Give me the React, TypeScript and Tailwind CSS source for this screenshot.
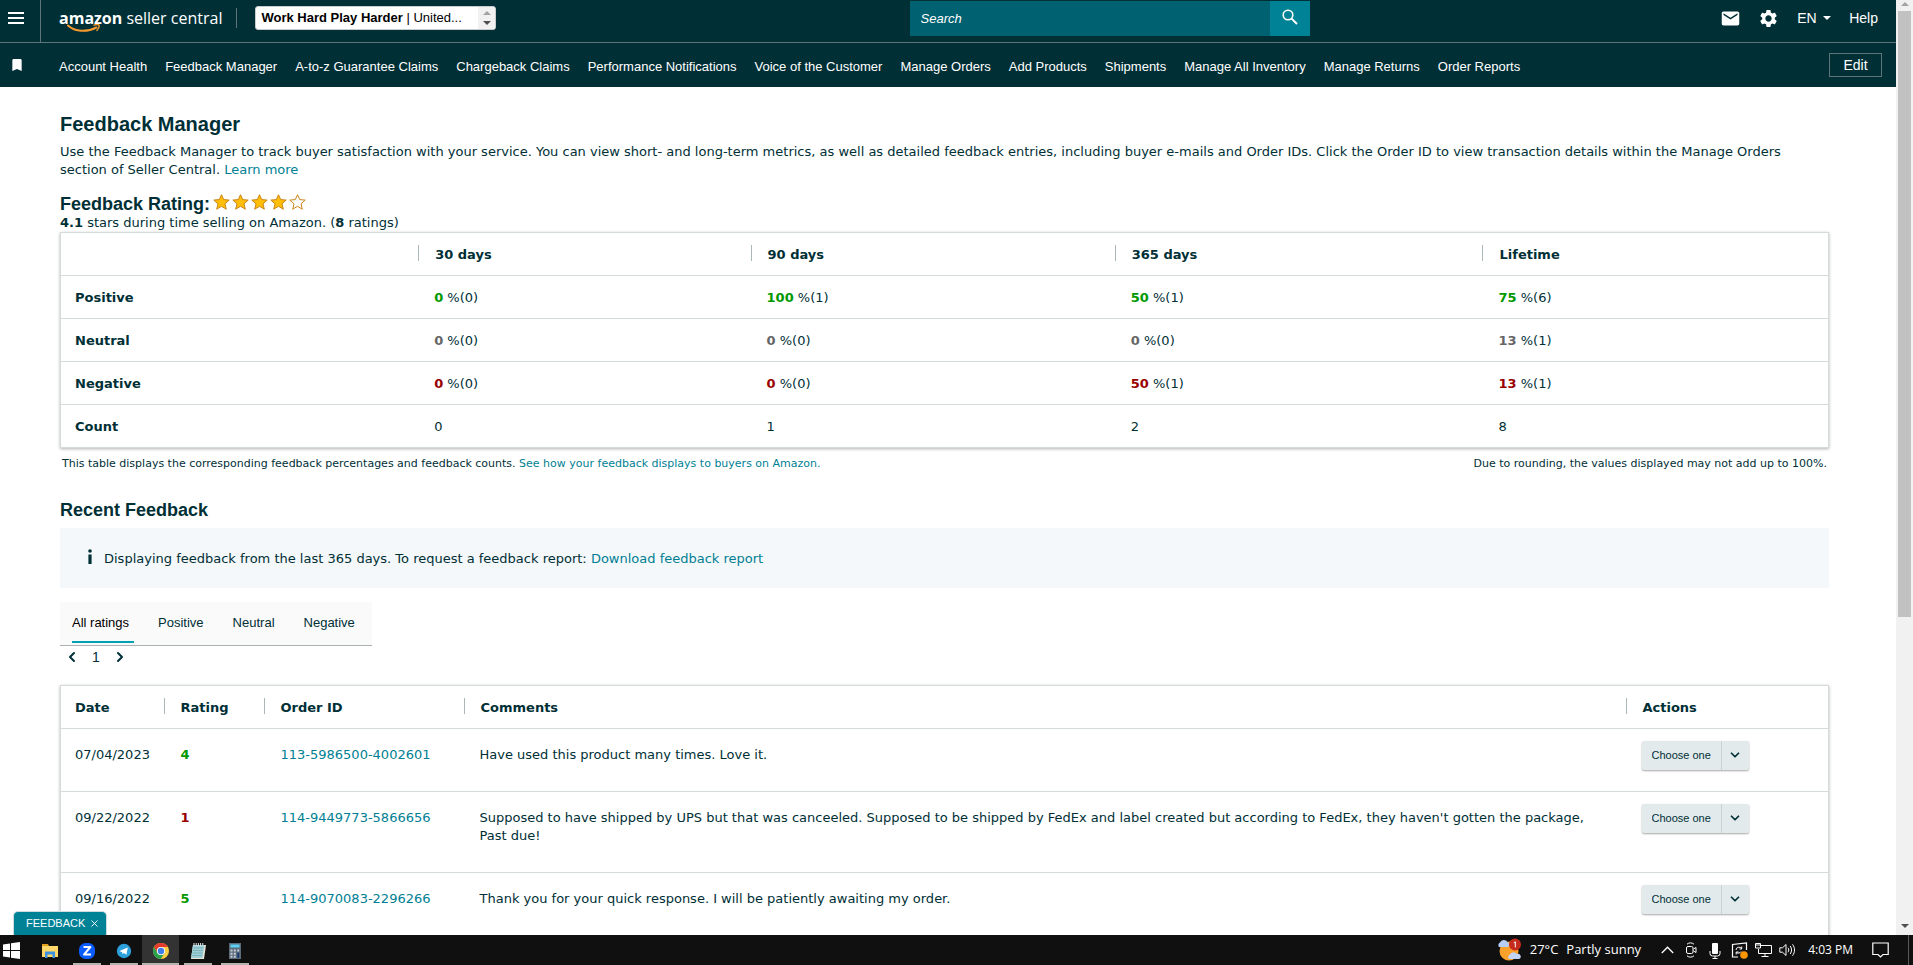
import React, { useState } from "react";
import { ChevronLeft, ChevronRight, ChevronDown, X } from "lucide-react";
import { MdSettings, MdEmail, MdBookmark } from "react-icons/md";

const navLinks = [
  "Account Health",
  "Feedback Manager",
  "A-to-z Guarantee Claims",
  "Chargeback Claims",
  "Performance Notifications",
  "Voice of the Customer",
  "Manage Orders",
  "Add Products",
  "Shipments",
  "Manage All Inventory",
  "Manage Returns",
  "Order Reports",
];

const periods = ["30 days", "90 days", "365 days", "Lifetime"];

const ratingRows = [
  { label: "Positive", color: "text-[#009900]", cells: [["0", "0"], ["100", "1"], ["50", "1"], ["75", "6"]] },
  { label: "Neutral", color: "text-[#666666]", cells: [["0", "0"], ["0", "0"], ["0", "0"], ["13", "1"]] },
  { label: "Negative", color: "text-[#990000]", cells: [["0", "0"], ["0", "0"], ["50", "1"], ["13", "1"]] },
];

const counts = ["0", "1", "2", "8"];

const feedback = [
  { date: "07/04/2023", rating: 4, order: "113-5986500-4002601", comment: "Have used this product many times. Love it." },
  {
    date: "09/22/2022",
    rating: 1,
    order: "114-9449773-5866656",
    comment:
      "Supposed to have shipped by UPS but that was canceeled. Supposed to be shipped by FedEx and label created but according to FedEx, they haven't gotten the package, Past due!",
  },
  { date: "09/16/2022", rating: 5, order: "114-9070083-2296266", comment: "Thank you for your quick response. I will be patiently awaiting my order." },
];

const tabs = ["All ratings", "Positive", "Neutral", "Negative"];

const linkClass = "text-[#007f94] hover:underline";

function Logo() {
  return (
    <a href="#" className="relative block whitespace-nowrap text-[16px] leading-[22px] text-white font-['Open_Sans','Noto_Sans',sans-serif]">
      <span className="font-bold">amazon</span> <span>seller central</span>
      <svg className="absolute left-2 top-[17px]" width="34" height="9" viewBox="0 0 34 9" fill="none" stroke="#f79a2d">
        <path d="M1 1.5 C8 8 20 8.5 29.5 3.5" strokeWidth="2" strokeLinecap="round" />
        <path d="M27 1.2 C29 .4 31.5 .6 32 1.2 C32.4 2.2 31.6 4.6 30 6.4" strokeWidth="1.4" strokeLinecap="round" />
      </svg>
    </a>
  );
}

function Header() {
  return (
    <header className="bg-[#002f36] text-white">
      <div className="flex h-[43px] items-start justify-between border-b border-[#5f7678]">
        <div className="flex flex-[8] items-start">
          <button aria-label="Menu" className="flex h-[42px] w-[41px] flex-col justify-start gap-[3px] border-r border-[#5f7678] px-2 pt-3">
            <span className="h-0.5 w-4 bg-white" />
            <span className="h-0.5 w-4 bg-white" />
            <span className="h-0.5 w-4 bg-white" />
          </button>
          <div className="flex items-center pl-[18px] pt-[6px]">
            <Logo />
            <span className="ml-[14px] h-5 w-px bg-[#5f7678]" />
            <button
              aria-haspopup="listbox"
              className="ml-[18px] flex h-6 w-[241px] items-center justify-between overflow-hidden rounded-[3px] border border-[#c9cccc] bg-white text-left text-[13px] text-black"
            >
              <span className="truncate pl-[5px]">
                <b>Work Hard Play Harder</b> | United...
              </span>
              <span className="flex h-full w-[17px] flex-col items-center justify-center gap-[6px] bg-[#f1f1f1]">
                <svg width="8" height="4" viewBox="0 0 8 4"><path d="M0 4 4 0 8 4Z" fill="#a3a3a3" /></svg>
                <svg width="8" height="4" viewBox="0 0 8 4"><path d="M0 0 4 4 8 0Z" fill="#505050" /></svg>
              </span>
            </button>
          </div>
        </div>
        <form role="search" className="mt-px flex h-[35px] w-[400px]" onSubmit={(e) => e.preventDefault()}>
          <input
            aria-label="Search"
            placeholder="Search"
            className="min-w-0 flex-1 bg-[#006170] px-[11px] text-[13px] italic text-white outline-none placeholder:text-white"
          />
          <button aria-label="Go" className="flex w-10 items-center justify-center bg-[#008296] pb-1">
            <svg width="16" height="16" viewBox="0 0 16 16" fill="none" stroke="#fff">
              <circle cx="6" cy="6" r="4.8" strokeWidth="1.6" />
              <path d="M9.6 9.6 15 15" strokeWidth="2" />
            </svg>
          </button>
        </form>
        <div className="flex h-9 flex-[5] items-center justify-end pr-[18px] text-[14px]">
          <button aria-label="Messages"><MdEmail size={21} /></button>
          <button aria-label="Settings" className="ml-[17px]"><MdSettings size={21} /></button>
          <div className="relative ml-[18px] flex items-center">
            <select aria-label="Language" className="w-[34px] appearance-none bg-transparent outline-none">
              <option>EN</option>
            </select>
            <svg className="pointer-events-none absolute right-0" width="8" height="4" viewBox="0 0 8 4"><path d="M0 0 4 4 8 0Z" fill="#fff" /></svg>
          </div>
          <a href="#" className="ml-[18px]">Help</a>
        </div>
      </div>
      <div className="flex h-11 items-center pt-[3px] text-[13px]">
        <button aria-label="Favorites" className="w-[41px] pb-[3px] pl-[9px]"><MdBookmark size={16} /></button>
        <nav className="flex flex-1 gap-[18px] pl-[18px]">
          {navLinks.map((link) => (
            <a key={link} href="#" className="whitespace-nowrap hover:underline">{link}</a>
          ))}
        </nav>
        <button className="mb-[3px] mr-[14px] h-6 w-[53px] border border-[#5f7678] text-[14px]">Edit</button>
      </div>
    </header>
  );
}

function Star({ filled }: { filled: boolean }) {
  return (
    <svg width="17" height="16" viewBox="0 0 17 16">
      <path
        d="M8.5 .7 10.7 5.6 16.2 6.1 12 9.8 13.3 15.2 8.5 12.3 3.7 15.2 5 9.8 .8 6.1 6.3 5.6Z"
        fill={filled ? "#ffbe0a" : "#fff"}
        stroke="#cb8417"
        strokeWidth="1"
        strokeLinejoin="round"
      />
    </svg>
  );
}

function HeadCell({ children, first = false }: { children?: React.ReactNode; first?: boolean }) {
  return (
    <th scope="col" className="h-[43px] p-0 pt-0.5 text-left font-bold">
      <div className={first ? "pl-[14px]" : "-ml-[3px] flex items-center"}>
        {!first && <span className="-mt-1 mr-4 h-4 w-px bg-[#a9b7b8]" />}
        {children}
      </div>
    </th>
  );
}

function SummaryTable() {
  return (
    <table className="w-full table-fixed border border-[#d5dbdb] shadow-[0_1px_3px_rgba(0,0,0,0.3)]">
      <colgroup>
        <col className="w-[20.4%]" />
        <col className="w-[18.8%]" />
        <col className="w-[20.6%]" />
        <col className="w-[20.8%]" />
        <col />
      </colgroup>
      <thead>
        <tr>
          <HeadCell first />
          {periods.map((p) => <HeadCell key={p}>{p}</HeadCell>)}
        </tr>
      </thead>
      <tbody>
        {ratingRows.map((row) => (
          <tr key={row.label} className="border-t border-[#d5dbdb]">
            <th scope="row" className="h-[43px] px-[14px] pt-0.5 text-left font-bold">{row.label}</th>
            {row.cells.map(([pct, n], i) => (
              <td key={i} className="px-[13px] pt-0.5">
                <b className={row.color}>{pct}</b> %({n})
              </td>
            ))}
          </tr>
        ))}
        <tr className="border-t border-[#d5dbdb]">
          <th scope="row" className="h-[43px] px-[14px] pt-0.5 text-left font-bold">Count</th>
          {counts.map((c, i) => <td key={i} className="px-[13px] pt-0.5">{c}</td>)}
        </tr>
      </tbody>
    </table>
  );
}

function ActionSelect({ order }: { order: string }) {
  return (
    <div className="relative h-[29px] w-[107px] rounded-[2px] bg-[#e2eaeb] shadow-[0_1px_2px_rgba(0,0,0,0.35)]">
      <select
        aria-label={"Action for order " + order}
        className="h-full w-full appearance-none bg-transparent pb-px pl-[10px] text-[11px] outline-none font-['Liberation_Sans',Arial,sans-serif]"
      >
        <option>Choose one</option>
      </select>
      <span className="pointer-events-none absolute inset-y-0 right-0 flex w-7 items-center justify-center border-l border-[#c9d3d4] pb-px">
        <ChevronDown size={14} strokeWidth={3} />
      </span>
    </div>
  );
}

function FeedbackTable() {
  return (
    <table className="w-full table-fixed border border-[#d5dbdb] shadow-[0_1px_3px_rgba(0,0,0,0.3)]">
      <colgroup>
        <col className="w-[106px]" />
        <col className="w-[100px]" />
        <col className="w-[200px]" />
        <col />
        <col className="w-[200px]" />
      </colgroup>
      <thead>
        <tr>
          <HeadCell first>Date</HeadCell>
          <HeadCell>Rating</HeadCell>
          <HeadCell>Order ID</HeadCell>
          <HeadCell>Comments</HeadCell>
          <HeadCell>Actions</HeadCell>
        </tr>
      </thead>
      <tbody>
        {feedback.map((f) => (
          <tr key={f.order} className="border-t border-[#d5dbdb] align-top">
            <td className="px-[14px] pt-[17px]">{f.date}</td>
            <td className={"px-[14px] pt-[17px] font-bold " + (f.rating > 3 ? "text-[#009900]" : "text-[#990000]")}>{f.rating}</td>
            <td className="px-[14px] pt-[17px]"><a href="#" className={linkClass}>{f.order}</a></td>
            <td className="pt-[17px] pr-8 pb-[27px] pl-[13px]">{f.comment}</td>
            <td className="px-[13px] pt-3"><ActionSelect order={f.order} /></td>
          </tr>
        ))}
      </tbody>
    </table>
  );
}

function Scrollbar() {
  return (
    <div className="flex w-[17px] shrink-0 flex-col items-center bg-[#f1f1f1]">
      <svg className="mb-[5px] mt-0.5" width="8" height="4" viewBox="0 0 8 4"><path d="M0 4 4 0 8 4Z" fill="#a3a3a3" /></svg>
      <div className="w-[13px] grow-[606] bg-[#c1c1c1]" />
      <div className="grow-[307]" />
      <svg className="mb-[7px]" width="8" height="4" viewBox="0 0 8 4"><path d="M0 0 4 4 8 0Z" fill="#505050" /></svg>
    </div>
  );
}

function TaskButton({ label, active = false, running = true, children }: { label: string; active?: boolean; running?: boolean; children: React.ReactNode }) {
  return (
    <button
      aria-label={label}
      className={"flex h-full w-[37px] flex-col items-center justify-end " + (active ? "bg-[#333333]" : "")}
    >
      {children}
      <span className={"mt-[3px] h-0.5 " + (active ? "w-full bg-[#b6b2ac]" : running ? "w-7 bg-[#b6b2ac]" : "w-7")} />
    </button>
  );
}

function TrayIcon({ width, children }: { width: number; children: React.ReactNode }) {
  return (
    <span className="flex w-6 justify-center">
      <svg width={width} height="17" viewBox={`0 0 ${width} 17`} fill="none" stroke="#fff">{children}</svg>
    </span>
  );
}

function Taskbar() {
  return (
    <footer className="flex h-[30px] shrink-0 items-center justify-between bg-[#101010] text-white font-['Open_Sans','Noto_Sans',sans-serif]">
      <div className="flex h-full items-center">
        <button aria-label="Start" className="w-[31px] pl-[3px]">
          <svg width="17" height="17" viewBox="0 0 17 17" fill="#fff">
            <path d="M0 2.4 7 1.4V8H0ZM8 1.2 17 0V8H8ZM0 9H7V15.6L0 14.6ZM8 9H17V17L8 15.8Z" />
          </svg>
        </button>
        <TaskButton label="File Explorer" running={false}>
          <svg width="18" height="18" viewBox="0 0 18 18">
            <path d="M1 2H7L8 4H1Z" fill="#e0a020" />
            <path d="M1 4H17V15H1Z" fill="#ffd869" />
            <path d="M4 9.5H14V16H11.5V12.5H6.5V16H4Z" fill="#3d91e0" />
          </svg>
        </TaskButton>
        <TaskButton label="Zoom">
          <svg width="18" height="18" viewBox="0 0 18 18">
            <rect x="1" y="1" width="16" height="16" rx="6.5" fill="#0b5cff" />
            <path d="M5.5 5H12.3L6 12.6H13" fill="none" stroke="#fff" strokeWidth="2" strokeLinejoin="round" />
          </svg>
        </TaskButton>
        <TaskButton label="Telegram">
          <svg width="18" height="18" viewBox="0 0 18 18">
            <circle cx="9" cy="9" r="7.2" fill="#2ba0da" />
            <path d="M4.4 9 12.8 5.6 11.4 12.8 8.8 11 7.4 12.3 7.2 10.2Z" fill="#fff" />
          </svg>
        </TaskButton>
        <TaskButton label="Chrome" active>
          <svg width="18" height="18" viewBox="0 0 18 18">
            <circle cx="9" cy="9" r="8" fill="#ffcd40" />
            <path d="M2 5.1A8 8 0 0 1 16 5H9A4 4 0 0 0 5.5 11Z" fill="#e33b2e" />
            <path d="M2 5.1A8 8 0 0 0 8.9 17L12.5 11A4 4 0 0 1 5.5 11Z" fill="#2aa14c" />
            <circle cx="9" cy="9" r="4.1" fill="#fff" />
            <circle cx="9" cy="9" r="3.2" fill="#3f7ee8" />
          </svg>
        </TaskButton>
        <TaskButton label="Notepad">
          <svg width="18" height="18" viewBox="0 0 18 18">
            <path d="M4 3H17L15 17H2Z" fill="#e9e4d4" />
            <path d="M4 3H15.5L13.5 16H2Z" fill="#9fd0d8" />
            <path d="M4.5 6H14.5M4 8.5H14M3.6 11H13.6M3.2 13.5H13.2" stroke="#6ba5b0" strokeWidth=".7" />
            <path d="M5 1V4M7.2 1V4M9.4 1V4M11.6 1V4M13.8 1V4" stroke="#dfe6e8" strokeWidth="1" />
          </svg>
        </TaskButton>
        <TaskButton label="Calculator">
          <svg width="18" height="18" viewBox="0 0 18 18">
            <rect x="3" y="1" width="12" height="16" fill="#5d6c7b" />
            <rect x="4.5" y="2.5" width="9" height="3" fill="#5bd0f5" />
            <path d="M4.5 7.5h2v2h-2zM7.8 7.5h2v2h-2zM4.5 10.7h2v2h-2zM7.8 10.7h2v2h-2zM4.5 13.8h2v2h-2zM7.8 13.8h2v2h-2zM11.2 7.5h2v2h-2z" fill="#c5ced6" />
            <path d="M11.2 10.7h2v5.1h-2z" fill="#1b3f78" />
          </svg>
        </TaskButton>
      </div>
      <div className="flex h-full items-center">
        <button className="flex items-center gap-2 text-[13px]">
          <svg width="25" height="24" viewBox="0 0 25 24">
            <circle cx="12" cy="13" r="9.5" fill="#f9a12a" />
            <path d="M2 9A3 3 0 0 1 3 4.5A4.2 4.2 0 0 1 10.5 4A2.8 2.8 0 0 1 11 9Z" fill="#b7cdf5" />
            <path d="M12 21A2.8 2.8 0 0 1 13 16.5A4 4 0 0 1 20 16A2.6 2.6 0 0 1 22 21Z" fill="#c3d5f7" />
            <circle cx="18" cy="6.5" r="6" fill="#c42b1c" />
            <path d="M16.8 4.8 18.3 3.8V9.4" fill="none" stroke="#fff" strokeWidth="1" />
          </svg>
          <span>27°C</span>
          <span>Partly sunny</span>
        </button>
        <div className="ml-[14px] flex items-center">
          <TrayIcon width={13}><path d="M.8 11 6.5 5.2 12.2 11" strokeWidth="1.3" /></TrayIcon>
          <TrayIcon width={12}>
            <rect x="1.5" y="4.5" width="6.5" height="7" rx="1.5" />
            <path d="M8.5 7 11 5.5V10.5L8.5 9M2 2.2C4 .4 7 .4 9 2.2M2 13.8C4 15.6 7 15.6 9 13.8" />
          </TrayIcon>
          <TrayIcon width={12}>
            <rect x="3" y="1" width="6" height="11" rx="1" fill="#fff" stroke="none" />
            <path d="M1 9V11.5A2.5 2.5 0 0 0 3.5 14H8.5A2.5 2.5 0 0 0 11 11.5V9M6 14V16.5M3.5 16.5H8.5" />
          </TrayIcon>
          <TrayIcon width={17}>
            <path d="M7 15H1.5V2.5L15.5 1V8" strokeWidth="1.2" />
            <path d="M5 8A3 3 0 0 1 10.5 6.5M10.7 4.5V7H8.5M10 9.5A3 3 0 0 1 5.5 10.5M5.2 12.5V10H7.5" />
            <circle cx="13" cy="13" r="3.8" fill="#ff9500" stroke="none" />
          </TrayIcon>
          <TrayIcon width={17}>
            <path d="M5.5 3.5H16.5V11.5H3.5V7M10 11.5V14.5M6.5 14.5H13.5" />
            <path d="M.5 1.5H5.5V6H.5ZM2 1.5V4M4 1.5V4" />
          </TrayIcon>
          <TrayIcon width={17}>
            <path d="M.8 5.8H3.5L7 2.5V13.5L3.5 10.2H.8Z" />
            <path d="M9 5.8C10 7 10 9 9 10.2M11.2 4C13 6.5 13 9.5 11.2 12M13.5 2.3C16.2 6 16.2 10 13.5 13.7" />
          </TrayIcon>
        </div>
        <span className="ml-[9px] text-[12px]">4:03 PM</span>
        <button aria-label="Notifications" className="ml-[19px]">
          <svg width="17" height="16" viewBox="0 0 17 16" fill="none" stroke="#fff"><path d="M.8 1H16.2V12.5H11L8.5 15 6 12.5H.8Z" strokeWidth="1.2" /></svg>
        </button>
        <span className="ml-[19px] mr-1 h-full w-px bg-[#5a5a5a]" />
      </div>
    </footer>
  );
}

export default function App() {
  const [tab, setTab] = useState("All ratings");
  const [showFeedback, setShowFeedback] = useState(true);

  return (
    <div className="flex h-screen flex-col overflow-hidden bg-white text-[#002f36] font-['Liberation_Sans',Arial,sans-serif]">
      <div className="relative flex min-h-0 flex-1">
        <div className="min-w-0 flex-1 overflow-hidden">
          <Header />
          <main className="pl-[60px] pr-[67px] pt-6 text-[13px] leading-[18px] font-['DejaVu_Sans',Verdana,sans-serif]">
            <h1 className="text-[20px] font-bold leading-[26px] font-['Liberation_Sans',Arial,sans-serif]">Feedback Manager</h1>
            <p className="mt-[6px]">
              Use the Feedback Manager to track buyer satisfaction with your service. You can view short- and long-term metrics, as well as detailed
              feedback entries, including buyer e-mails and Order IDs. Click the Order ID to view transaction details within the Manage Orders section of
              Seller Central. <a href="#" className={linkClass}>Learn more</a>
            </p>
            <div className="mt-[14px] flex h-[21px] items-center">
              <h2 className="text-[18px] font-bold font-['Liberation_Sans',Arial,sans-serif]">Feedback Rating:</h2>
              <div role="img" aria-label="4 out of 5 stars" className="mb-1 ml-[3px] flex gap-0.5">
                {[1, 2, 3, 4, 5].map((n) => <Star key={n} filled={n < 5} />)}
              </div>
            </div>
            <p><b>4.1</b> stars during time selling on Amazon. (<b>8</b> ratings)</p>
            <SummaryTable />
            <div className="flex justify-between px-0.5 pt-[7px] text-[11px]">
              <p>
                This table displays the corresponding feedback percentages and feedback counts.{" "}
                <a href="#" className={linkClass}>See how your feedback displays to buyers on Amazon.</a>
              </p>
              <p>Due to rounding, the values displayed may not add up to 100%.</p>
            </div>
            <h2 className="mt-[25px] text-[18px] font-bold leading-6 font-['Liberation_Sans',Arial,sans-serif]">Recent Feedback</h2>
            <div className="mt-[6px] flex h-[60px] items-center bg-[#f4f8fa] pl-7 pt-0.5">
              <svg className="mb-[6px] mr-3" width="4" height="15" viewBox="0 0 4 15" fill="#002f36"><circle cx="2" cy="2" r="1.8" /><path d="M.4 5.5H3.6V15H.4Z" /></svg>
              <p>
                Displaying feedback from the last 365 days. To request a feedback report:{" "}
                <a href="#" className={linkClass}>Download feedback report</a>
              </p>
            </div>
            <div role="tablist" className="mt-[14px] flex h-11 w-[312px] gap-6 border-b border-[#a9b1b1] bg-[#fafafa] pl-3 font-['Liberation_Sans',Arial,sans-serif]">
              {tabs.map((t) => (
                <button
                  key={t}
                  role="tab"
                  aria-selected={t === tab}
                  onClick={() => setTab(t)}
                  className={"mb-0.5 whitespace-nowrap border-b-2 pr-[5px] pt-0.5 " + (t === tab ? "border-[#00a3b4] text-black" : "border-transparent")}
                >
                  {t}
                </button>
              ))}
            </div>
            <div className="mt-px flex h-5 items-center pl-1 text-[14px] font-['Liberation_Sans',Arial,sans-serif]">
              <button aria-label="Previous page"><ChevronLeft size={16} strokeWidth={3} /></button>
              <span className="w-8 text-center">1</span>
              <button aria-label="Next page"><ChevronRight size={16} strokeWidth={3} /></button>
            </div>
            <div className="mt-[18px]">
              <FeedbackTable />
            </div>
          </main>
        </div>
        <Scrollbar />
        {showFeedback && (
          <div className="absolute bottom-0 left-[13px] flex h-6 items-center gap-1 rounded-t-[5px] border border-b-0 border-[#cfdcde] bg-[#008296] pl-3 pr-[6px] text-[11px] text-white">
            <button>FEEDBACK</button>
            <button aria-label="Close" onClick={() => setShowFeedback(false)}><X size={11} strokeWidth={2} /></button>
          </div>
        )}
      </div>
      <Taskbar />
    </div>
  );
}
